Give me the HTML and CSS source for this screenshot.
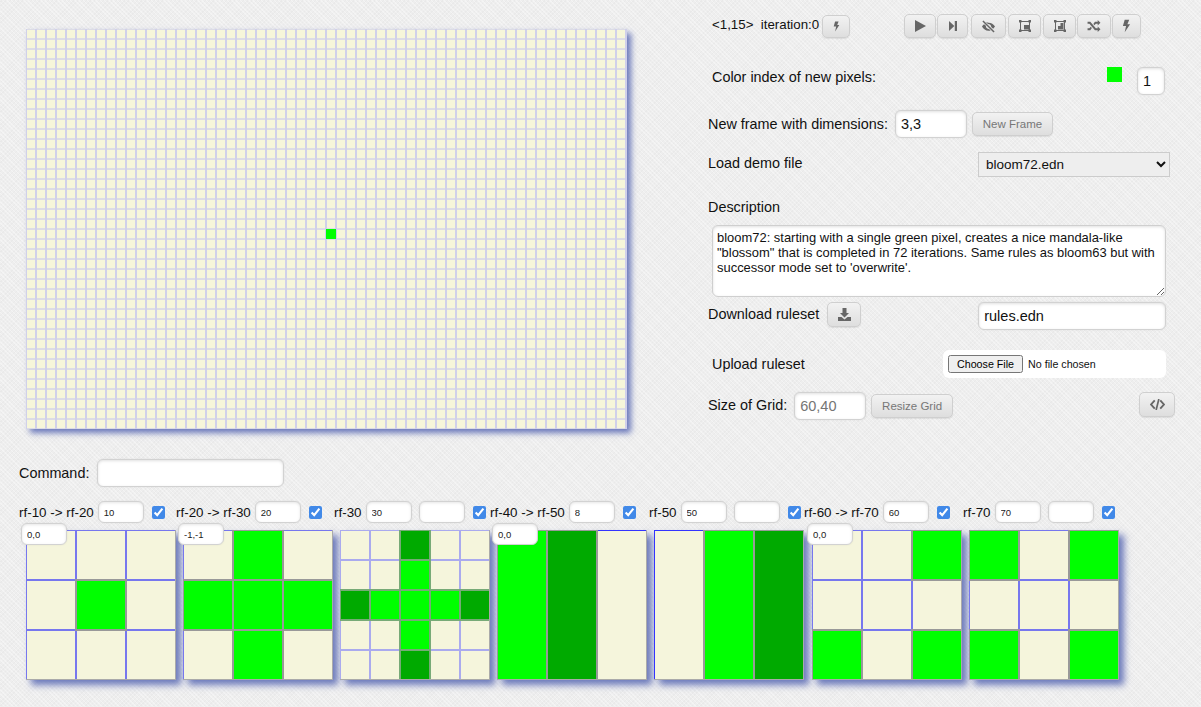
FILE: index.html
```html
<!DOCTYPE html>
<html lang="en">
<head>
    <meta charset="UTF-8">
    <title>Rule Grid</title>
    <link rel="stylesheet" href="styles.css">
</head>
<body>
    <div class="top">
        <div class="stage"><div class="pixel"></div></div>

        <div class="controls">
            <div class="row row-status">
                <span class="status raise-2">&lt;1,15&gt;&nbsp; iteration:0</span>
                <button type="button" class="btn btn-status"><svg viewBox="0 0 10 14" width="7" height="11"><path d="M3 0h5L6 5h3L3 14l1.500-7H1z"/></svg></button>
                <div class="toolbar">
                    <button type="button" class="btn w32"><svg viewBox="0 0 11 12" width="11" height="12"><path d="M0 0l11 6-11 6z"/></svg></button>
                    <button type="button" class="btn w31"><svg viewBox="0 0 9 11" width="8" height="10"><path d="M0 0l6 5.500-6 5.500zM6.500 0H9v11H6.500z"/></svg></button>
                    <button type="button" class="btn w35"><svg viewBox="0 0 16 14" width="15" height="13"><path d="M8 3c3 0 5.500 1.800 7 4-.5.800-1.200 1.600-2 2.300L11 7.500C10.800 5.500 9.500 4.300 7.500 4.200L5.600 2.600C6.300 2.300 7.100 3 8 3zM1 7c.6-.9 1.300-1.700 2.200-2.400l2 1.700C5 7.900 6.200 9.900 8.800 9.900l1.500 1.300c-.7.300-1.500.4-2.300.4-3 0-5.500-2-7-4.600z"/><path d="M2 1l12 12" fill="none" stroke="#666" stroke-width="1.600"/></svg></button>
                    <button type="button" class="btn w33"><svg viewBox="0 0 12 12" width="12" height="12"><path d="M1.500 1.500h9v9h-9z" fill="none" stroke="#666"/><path d="M0 0h2.500v2.500H0zM9.500 0H12v2.500H9.500zM0 9.500h2.500V12H0zM9.500 9.500H12V12H9.500zM5 5h5v4.500H5z"/></svg></button>
                    <button type="button" class="btn w33"><svg viewBox="0 0 12 12" width="12" height="12"><path d="M1.500 1.500h9v9h-9z" fill="none" stroke="#666"/><path d="M0 0h2.500v2.500H0zM9.500 0H12v2.500H9.500zM0 9.500h2.500V12H0zM9.500 9.500H12V12H9.500zM6.500 3h3v6.500H4V6h2.500z"/></svg></button>
                    <button type="button" class="btn w34"><svg viewBox="0 0 14 13" width="14" height="12"><path d="M0 2h3l6 7h2V7l3 3-3 3v-2H8L2 4H0zM0 9h2l1.500-1.800 1.200 1.500L3 11H0zM8 2h3V0l3 3-3 3V4H9L7.500 5.800 6.300 4.300z"/></svg></button>
                    <button type="button" class="btn w29"><svg viewBox="0 0 10 14" width="9" height="14"><path d="M3 0h5L6 5h3L3 14l1.500-7H1z"/></svg></button>
                </div>
            </div>

            <div class="row row-color">
                <span class="raise-4">Color index of new pixels:</span>
                <span class="swatch"></span>
                <input type="text" class="field field-index" value="1">
            </div>

            <div class="row row-frame">
                <span>New frame with dimensions:</span>
                <input type="text" class="field field-size" value="3,3">
                <button type="button" class="btn btn-text">New Frame</button>
            </div>

            <div class="row row-demo">
                <span class="raise-2">Load demo file</span>
                <select class="demo-select">
                    <option>bloom72.edn</option>
                </select>
            </div>

            <div class="row row-desc-label">Description</div>
            <textarea class="description">bloom72: starting with a single green pixel, creates a nice mandala-like "blossom" that is completed in 72 iterations. Same rules as bloom63 but with successor mode set to 'overwrite'.</textarea>

            <div class="row row-download">
                <span class="raise-2">Download ruleset</span>
                <button type="button" class="btn btn-download"><svg viewBox="0 0 13 13" width="13" height="13"><path d="M4.500 0h4v5H11L6.500 9.500 2 5h2.500zM0 9h3.500l3 2.500 3-2.500H13v4H0z"/></svg></button>
                <input type="text" class="field field-file" value="rules.edn">
            </div>

            <div class="row row-upload">
                <span>Upload ruleset</span>
                <input type="file" class="upload">
            </div>

            <div class="row row-grid">
                <span class="grid-label">Size of Grid:</span>
                <input type="text" class="field field-size field-grid" placeholder="60,40">
                <button type="button" class="btn btn-text btn-resize">Resize Grid</button>
                <button type="button" class="btn btn-code"><svg viewBox="0 0 16 12" width="15" height="11"><path d="M5 1.500L1 6l4 4.500M11 1.500L15 6l-4 4.500" fill="none" stroke="#666" stroke-width="2"/><path d="M9.500 0L6.500 12" fill="none" stroke="#666" stroke-width="1.800"/></svg></button>
            </div>
        </div>
    </div>

    <div class="command">
        <label for="command">Command:</label>
        <input type="text" id="command" class="field field-command">
    </div>

    <div class="rule-heads">
        <div class="head"><span>rf-10 -&gt; rf-20</span><input type="text" class="mini" value="10"><input type="checkbox" checked></div>
        <div class="head"><span>rf-20 -&gt; rf-30</span><input type="text" class="mini" value="20"><input type="checkbox" checked></div>
        <div class="head"><span>rf-30</span><input type="text" class="mini" value="30"><input type="text" class="mini"><input type="checkbox" checked></div>
        <div class="head"><span>rf-40 -&gt; rf-50</span><input type="text" class="mini" value="8"><input type="checkbox" checked></div>
        <div class="head"><span>rf-50</span><input type="text" class="mini" value="50"><input type="text" class="mini"><input type="checkbox" checked></div>
        <div class="head"><span>rf-60 -&gt; rf-70</span><input type="text" class="mini" value="60"><input type="checkbox" checked></div>
        <div class="head"><span>rf-70</span><input type="text" class="mini" value="70"><input type="text" class="mini"><input type="checkbox" checked></div>
    </div>

    <div class="panels">
        <div class="panel">
            <div class="cells cols-3">
                <i></i><i></i><i></i>
                <i></i><i class="on"></i><i></i>
                <i></i><i></i><i></i>
            </div>
            <input type="text" class="mini offset" value="0,0">
        </div>
        <div class="panel">
            <div class="cells cols-3">
                <i></i><i class="on"></i><i></i>
                <i class="on"></i><i class="on"></i><i class="on"></i>
                <i></i><i class="on"></i><i></i>
            </div>
            <input type="text" class="mini offset" value="-1,-1">
        </div>
        <div class="panel">
            <div class="cells cols-5">
                <i></i><i></i><i class="dark"></i><i></i><i></i>
                <i></i><i></i><i class="on"></i><i></i><i></i>
                <i class="dark"></i><i class="on"></i><i class="on"></i><i class="on"></i><i class="dark"></i>
                <i></i><i></i><i class="on"></i><i></i><i></i>
                <i></i><i></i><i class="dark"></i><i></i><i></i>
            </div>
        </div>
        <div class="panel">
            <div class="cells bars">
                <i class="on"></i><i class="dark"></i><i></i>
            </div>
            <input type="text" class="mini offset" value="0,0">
        </div>
        <div class="panel">
            <div class="cells bars">
                <i></i><i class="on"></i><i class="dark"></i>
            </div>
        </div>
        <div class="panel panel-wide-gap">
            <div class="cells cols-3">
                <i></i><i></i><i class="on"></i>
                <i></i><i></i><i></i>
                <i class="on"></i><i></i><i class="on"></i>
            </div>
            <input type="text" class="mini offset" value="0,0">
        </div>
        <div class="panel">
            <div class="cells cols-3">
                <i class="on"></i><i></i><i class="on"></i>
                <i></i><i></i><i></i>
                <i class="on"></i><i></i><i class="on"></i>
            </div>
        </div>
    </div>
</body>
</html>
```

FILE: styles.css
```css
* {
    box-sizing: border-box;
}
body {
    margin: 0;
    padding-bottom: 27px;
    font-family: "Liberation Sans", Arial, sans-serif;
    font-size: 14.4px;
    color: #111;
    background-color: #eeeeee;
    background-image:
        repeating-linear-gradient(45deg, rgba(255,255,255,.35) 0 1px, transparent 1px 3px),
        repeating-linear-gradient(-45deg, rgba(0,0,0,.018) 0 1px, transparent 1px 3px);
}
.raise-2 {
    margin-bottom: 4px;
}
.raise-4 {
    margin-bottom: 8px;
}
.top {
    display: flex;
    height: 429px;
}
.stage {
    position: relative;
    width: 601px;
    height: 400px;
    margin: 29px 0 0 26px;
    background-color: #f6f6da;
    background-image:
        linear-gradient(90deg, #d0d0ea 0 1px, transparent 1px 9px, #d0d0ea 9px),
        linear-gradient(#dcdce6 0 1px, transparent 1px 9px, #dcdce6 9px);
    background-size: 10px 10px;
    box-shadow: 4px 4px 6px #6b79bb;
}
.pixel {
    position: absolute;
    left: 300px;
    top: 200px;
    width: 10px;
    height: 10px;
    background: #00ff00;
}
.controls {
    width: 467px;
    margin-left: 81px;
    padding-top: 14px;
}
.row {
    display: flex;
    align-items: center;
    white-space: nowrap;
}
.row-status {
    height: 24px;
    padding-left: 4px;
    font-size: 13.3px;
}
.status {
    width: 110px;
}
.toolbar {
    display: flex;
    gap: 1px;
    margin-left: 54px;
}
.btn {
    display: flex;
    align-items: center;
    justify-content: center;
    height: 24px;
    padding: 0;
    border: 1px solid #cfcfcf;
    border-radius: 5px;
    background: linear-gradient(#f2f2f2, #dedede);
    box-shadow: 0 1px 1px rgba(0,0,0,.08);
}
.btn svg {
    fill: #666;
}
.btn-status {
    width: 28px;
    height: 23px;
}
.w29 { width: 29px; }
.w31 { width: 31px; }
.w32 { width: 32px; }
.w33 { width: 33px; margin-left: 1px; }
.w34 { width: 34px; }
.w35 { width: 35px; margin-left: 2px; }
.btn-text {
    width: 81px;
    margin-left: 5px;
    font: 11.5px "Liberation Sans", Arial, sans-serif;
    color: #777;
}
.field {
    height: 28px;
    padding: 0 5px;
    border: 1px solid #d2d2d2;
    border-radius: 6px;
    background: #fff;
    box-shadow: inset 0 1px 3px rgba(0,0,0,.12), 0 0 2px rgba(0,0,0,.08);
    font: 14.5px "Liberation Sans", Arial, sans-serif;
    color: #111;
}
.row-color {
    height: 28px;
    margin-top: 29px;
    padding-left: 4px;
}
.swatch {
    flex: none;
    width: 15px;
    height: 15px;
    margin: -13px 0 0 231px;
    background: #00ff00;
}
.field-index {
    width: 28px;
    margin-left: 15px;
}
.row-frame {
    height: 28px;
    margin-top: 15px;
}
.field-size {
    flex: none;
    width: 72px;
    margin-left: 7px;
}
.row-demo {
    justify-content: space-between;
    height: 25px;
    margin-top: 14px;
    padding-right: 5px;
}
.demo-select {
    width: 192px;
    height: 25px;
    padding-left: 3px;
    border: 1px solid #ccc;
    background: #eee;
    font: 13.5px "Liberation Sans", Arial, sans-serif;
    color: #111;
}
.row-desc-label {
    height: 16px;
    margin-top: 22px;
}
.description {
    display: block;
    width: 454px;
    height: 72px;
    margin: 10px 0 0 4px;
    padding: 4px;
    border: 1px solid #cfcfcf;
    border-radius: 6px;
    background: #fff;
    box-shadow: inset 0 1px 3px rgba(0,0,0,.12);
    font: 12.95px/15px "Liberation Sans", Arial, sans-serif;
    color: #111;
}
.row-download {
    height: 28px;
    margin-top: 5px;
}
.btn-download {
    width: 34px;
    height: 25px;
    margin: -3px 0 0 8px;
}
.field-file {
    width: 188px;
    margin-left: 117px;
}
.row-upload {
    justify-content: space-between;
    height: 28px;
    margin-top: 20px;
    padding: 0 9px 0 4px;
}
.upload {
    width: 223px;
    height: 28px;
    padding: 5px;
    border-radius: 6px;
    background: #fff;
    font: 10.7px "Liberation Sans", Arial, sans-serif;
}
.upload::file-selector-button {
    height: 18px;
    margin-right: 5px;
    padding: 0 7px;
    font: 10.7px "Liberation Sans", Arial, sans-serif;
}
.row-grid {
    height: 28px;
    margin-top: 14px;
}
.grid-label {
    margin-bottom: 2px;
}
.field-grid {
    margin-left: 7px;
}
.btn-resize {
    width: 82px;
}
.btn-code {
    width: 36px;
    height: 25px;
    margin: -3px 0 0 186px;
}
.command {
    display: flex;
    align-items: center;
    gap: 8px;
    height: 28px;
    margin: 30px 0 0 19px;
}
.field-command {
    width: 187px;
}
.rule-heads {
    display: grid;
    grid-template-columns: 157px 158px 156px 159px 155px 159px auto;
    height: 22px;
    margin: 14px 0 0 19px;
}
.head {
    display: flex;
    align-items: center;
    gap: 7px;
    font-size: 13.4px;
}
.head span {
    margin-right: -3px;
    white-space: nowrap;
}
.head input[type="checkbox"] {
    flex: none;
    width: 13px;
    height: 13px;
    margin: 0 0 0 1px;
    accent-color: #4189e8;
}
.mini {
    flex: none;
    width: 46px;
    height: 22px;
    padding: 0 5px;
    border: 1px solid #d2d2d2;
    border-radius: 6px;
    background: #fff;
    box-shadow: inset 0 1px 3px rgba(0,0,0,.1), 0 0 2px rgba(0,0,0,.08);
    font: 9.5px "Liberation Sans", Arial, sans-serif;
    color: #222;
}
.panels {
    display: flex;
    gap: 7px;
    margin: 7px 0 0 26px;
}
.panel {
    position: relative;
    flex: none;
    width: 150px;
    height: 150px;
    box-shadow: 5px 5px 7px #6b79bb;
}
.panel-wide-gap {
    margin-left: 1px;
}
.cells {
    position: relative;
    display: grid;
    width: 100%;
    height: 100%;
    overflow: hidden;
    --off: #7777ee;
    --edge: #999999;
}
.cells::after {
    content: "";
    position: absolute;
    inset: 0;
    z-index: 2;
    border-right: 1px solid #aaaaaa;
    border-bottom: 1px solid #aaaaaa;
}
.cols-3 {
    grid-template: repeat(3, 1fr) / repeat(3, 1fr);
}
.cols-5 {
    grid-template: repeat(5, 1fr) / repeat(5, 1fr);
    --off: #aaaaee;
    --edge: #77aa77;
}
.bars {
    grid-template-columns: repeat(3, 1fr);
    --off: #3333ff;
}
.cells i {
    background: #f5f5dc;
    outline: 2px solid var(--off);
    outline-offset: -1px;
}
.cells .on,
.cells .dark {
    position: relative;
    z-index: 1;
    outline-color: var(--edge);
}
.cells .on {
    background: #00ff00;
}
.cells .dark {
    background: #00aa00;
}
.offset {
    position: absolute;
    left: -5px;
    top: -7px;
    z-index: 3;
}
```
